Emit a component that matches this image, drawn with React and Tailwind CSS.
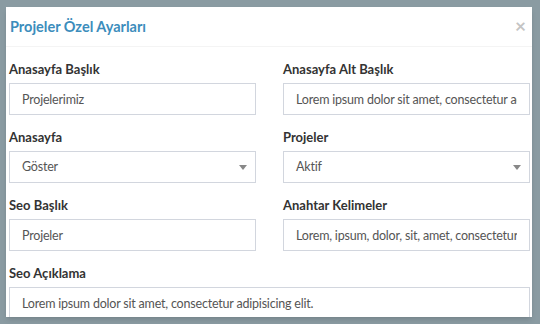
import React from 'react';

const Label = ({ children }) => (
  <label className="block h-[18px] leading-[18px] text-[13px] font-bold text-[#333] mb-[5px]">{children}</label>
);

const TextField = ({ label, value }) => (
  <div>
    <Label>{label}</Label>
    <input
      readOnly
      value={value}
      className="block w-full h-[32px] px-[12px] border border-[#d2d6de] bg-white text-[12.5px] tracking-[-0.2px] text-[#555] outline-none"
    />
  </div>
);

const SelectField = ({ label, value }) => (
  <div>
    <Label>{label}</Label>
    <div className="flex items-center justify-between h-[32px] pl-[12px] pr-[8px] border border-[#d2d6de] bg-white text-[12.5px] tracking-[-0.2px] text-[#555]">
      <span>{value}</span>
      <span className="w-0 h-0 border-l-[4px] border-r-[4px] border-t-[5px] border-l-transparent border-r-transparent border-t-[#888]" />
    </div>
  </div>
);

export default function App() {
  return (
    <div className="w-[540px] h-[324px] overflow-hidden bg-[#8a9ba2] pt-[7px] pl-[6px]" style={{ fontFamily: 'Lato, "Open Sans", sans-serif' }}>
      <div className="w-[526px] h-[310px] overflow-hidden bg-white shadow-md">
        {/* Header */}
        <div className="flex items-center justify-between h-[40px] pl-[4px] pr-[6px] border-b border-[#f4f4f4]">
          <h4 className="text-[14.5px] font-bold text-[#3c8dbc]">Projeler Özel Ayarları</h4>
          <span className="text-[19px] font-bold leading-none text-[#c4c4c4] -mt-[2px]">×</span>
        </div>

        {/* Body */}
        <div className="pt-[13px] pl-[3px] pr-[2px]">
          <div className="grid grid-cols-2 gap-x-[27px] gap-y-[13px]">
            <TextField label="Anasayfa Başlık" value="Projelerimiz" />
            <TextField label="Anasayfa Alt Başlık" value="Lorem ipsum dolor sit amet, consectetur adipisicing elit." />
            <SelectField label="Anasayfa" value="Göster" />
            <SelectField label="Projeler" value="Aktif" />
            <TextField label="Seo Başlık" value="Projeler" />
            <TextField label="Anahtar Kelimeler" value="Lorem, ipsum, dolor, sit, amet, consectetur, adipisicing" />
            <div className="col-span-2">
              <TextField label="Seo Açıklama" value="Lorem ipsum dolor sit amet, consectetur adipisicing elit." />
            </div>
          </div>
        </div>
      </div>
    </div>
  );
}
